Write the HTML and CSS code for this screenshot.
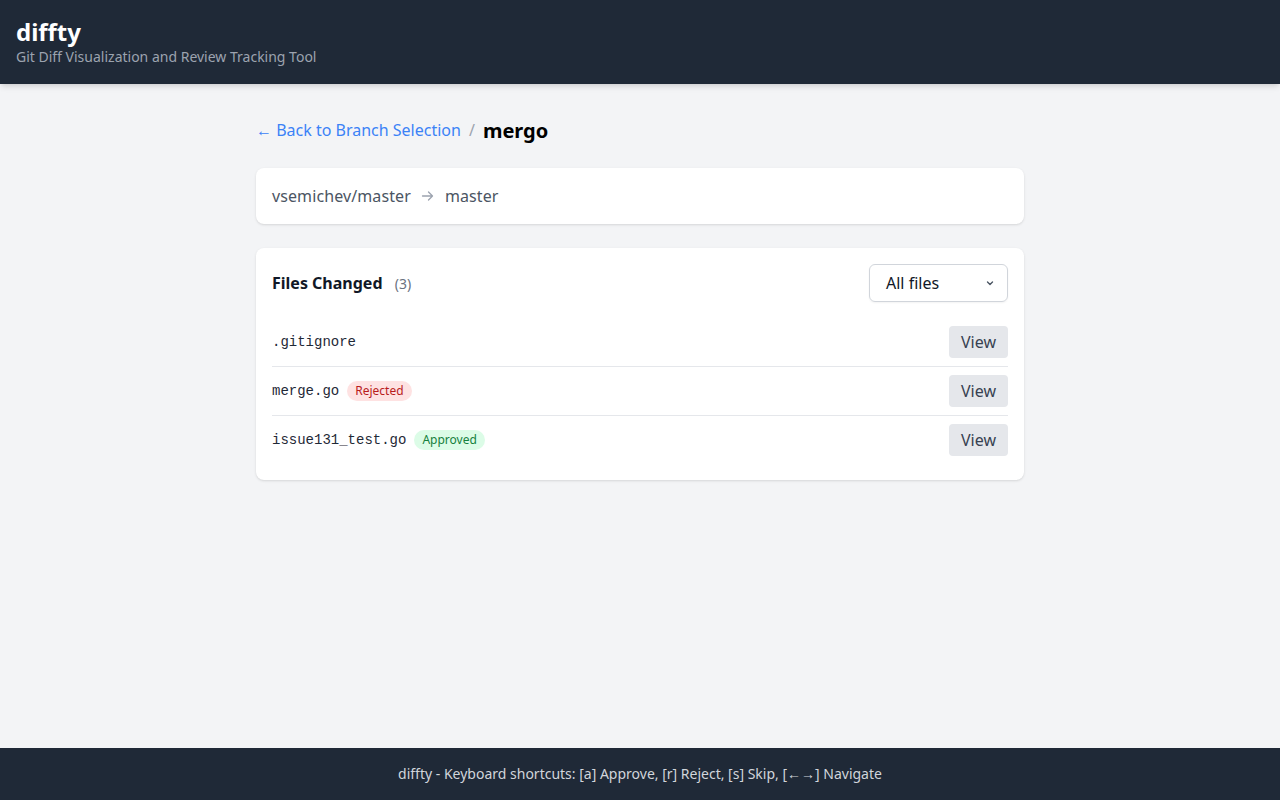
FILE: index.html
```html
<!DOCTYPE html>
<html lang="en">
<head>
<meta charset="utf-8">
<title>diffty</title>
<link rel="stylesheet" href="styles.css">
</head>
<body>
<header class="site-header">
  <h1 class="brand">diffty</h1>
  <p class="tagline">Git Diff Visualization and Review Tracking Tool</p>
</header>
<main class="main">
  <div class="container">
    <nav class="breadcrumb">
      <a class="back-link" href="#">← Back to Branch Selection</a>
      <span class="sep">/</span>
      <span class="repo">mergo</span>
    </nav>
    <section class="card branches">
      <span class="branch">vsemichev/master</span>
      <svg class="arrow" width="16" height="16" viewBox="0 0 16 16"><path d="M2.5 8h10M8.5 4l4 4-4 4" fill="none" stroke="#9ca3af" stroke-width="1.3" stroke-linecap="round" stroke-linejoin="round"/></svg>
      <span class="branch">master</span>
    </section>
    <section class="card files">
      <div class="files-head">
        <h2 class="files-title">Files Changed <span class="count">(3)</span></h2>
        <div class="select">
          <span>All files</span>
          <svg class="chev" width="10" height="10" viewBox="0 0 10 10"><path d="M2.5 4l2.5 2.5L7.5 4" fill="none" stroke="#4b5563" stroke-width="1.4" stroke-linecap="round" stroke-linejoin="round"/></svg>
        </div>
      </div>
      <ul class="file-list">
        <li class="file-row">
          <div class="file-name"><span class="mono">.gitignore</span></div>
          <button class="view-btn">View</button>
        </li>
        <li class="file-row">
          <div class="file-name"><span class="mono">merge.go</span><span class="badge rejected">Rejected</span></div>
          <button class="view-btn">View</button>
        </li>
        <li class="file-row">
          <div class="file-name"><span class="mono">issue131_test.go</span><span class="badge approved">Approved</span></div>
          <button class="view-btn">View</button>
        </li>
      </ul>
    </section>
  </div>
</main>
<footer class="site-footer">
  diffty - Keyboard shortcuts: [a] Approve, [r] Reject, [s] Skip, [←→] Navigate
</footer>
</body>
</html>
```

FILE: styles.css
```css
* { box-sizing: border-box; }
html, body { margin: 0; padding: 0; }
body {
  font-family: "Noto Sans", "Open Sans", sans-serif;
  background: #f3f4f6;
  color: #111827;
  min-height: 100vh;
  display: flex;
  flex-direction: column;
}
.site-header {
  background: #1f2937;
  color: #fff;
  padding: 16px;
  height: 84px;
  box-shadow: 0 4px 6px -1px rgba(0,0,0,0.1), 0 2px 4px -2px rgba(0,0,0,0.1);
  position: relative;
  z-index: 1;
}
.brand {
  margin: 0;
  font-size: 24px;
  line-height: 32px;
  font-weight: 700;
}
.tagline {
  margin: 0;
  font-size: 14px;
  line-height: 18px;
  color: #9ca3af;
}
.main {
  flex: 1;
  padding: 32px 16px;
}
.container {
  max-width: 768px;
  margin: 0 auto;
}
.breadcrumb {
  display: flex;
  align-items: center;
  height: 28px;
  margin-bottom: 24px;
}
.back-link {
  color: #3b82f6;
  text-decoration: none;
  font-size: 16px;
}
.sep {
  color: #9ca3af;
  margin: 0 8px;
  font-size: 16px;
}
.repo {
  font-size: 20px;
  font-weight: 700;
  color: #000;
}
.card {
  background: #fff;
  border-radius: 8px;
  box-shadow: 0 1px 3px 0 rgba(0,0,0,0.1), 0 1px 2px -1px rgba(0,0,0,0.1);
  padding: 16px;
}
.branches {
  display: flex;
  align-items: center;
  gap: 8px;
  font-size: 16px;
  line-height: 24px;
  color: #4b5563;
  margin-bottom: 24px;
}
.branch { letter-spacing: 0.1px; }
.arrow { display: block; margin: 0 1px 0 1px; }
.files-head {
  display: flex;
  justify-content: space-between;
  align-items: center;
  margin-bottom: 16px;
}
.files-title {
  margin: 0;
  font-size: 16px;
  font-weight: 700;
  line-height: 24px;
}
.count {
  font-size: 14px;
  font-weight: 400;
  color: #6b7280;
  margin-left: 8px;
}
.select {
  width: 139px;
  height: 38px;
  border: 1px solid #d1d5db;
  border-radius: 6px;
  box-shadow: 0 1px 2px 0 rgba(0,0,0,0.05);
  display: flex;
  align-items: center;
  justify-content: space-between;
  padding: 0 12px 0 16px;
  font-size: 16px;
  color: #111827;
}
.file-list {
  list-style: none;
  margin: 0;
  padding: 0;
}
.file-row {
  display: flex;
  justify-content: space-between;
  align-items: center;
  padding: 8px 0;
  border-bottom: 1px solid #e5e7eb;
}
.file-row:last-child { border-bottom: none; }
.file-name {
  display: flex;
  align-items: center;
  gap: 8px;
}
.mono {
  font-family: "Liberation Mono", monospace;
  font-size: 14px;
  color: #1f2937;
}
.badge {
  font-size: 12px;
  line-height: 16px;
  padding: 2px 8px;
  border-radius: 9999px;
}
.rejected { background: #fee2e2; color: #b91c1c; }
.approved { background: #dcfce7; color: #15803d; }
.view-btn {
  font-family: inherit;
  font-size: 16px;
  line-height: 24px;
  color: #374151;
  background: #e5e7eb;
  border: none;
  border-radius: 4px;
  padding: 4px 12px;
  width: 59px;
  height: 32px;
}
.site-footer {
  background: #1f2937;
  color: #d1d5db;
  text-align: center;
  font-size: 14px;
  line-height: 20px;
  padding: 16px;
}
```
